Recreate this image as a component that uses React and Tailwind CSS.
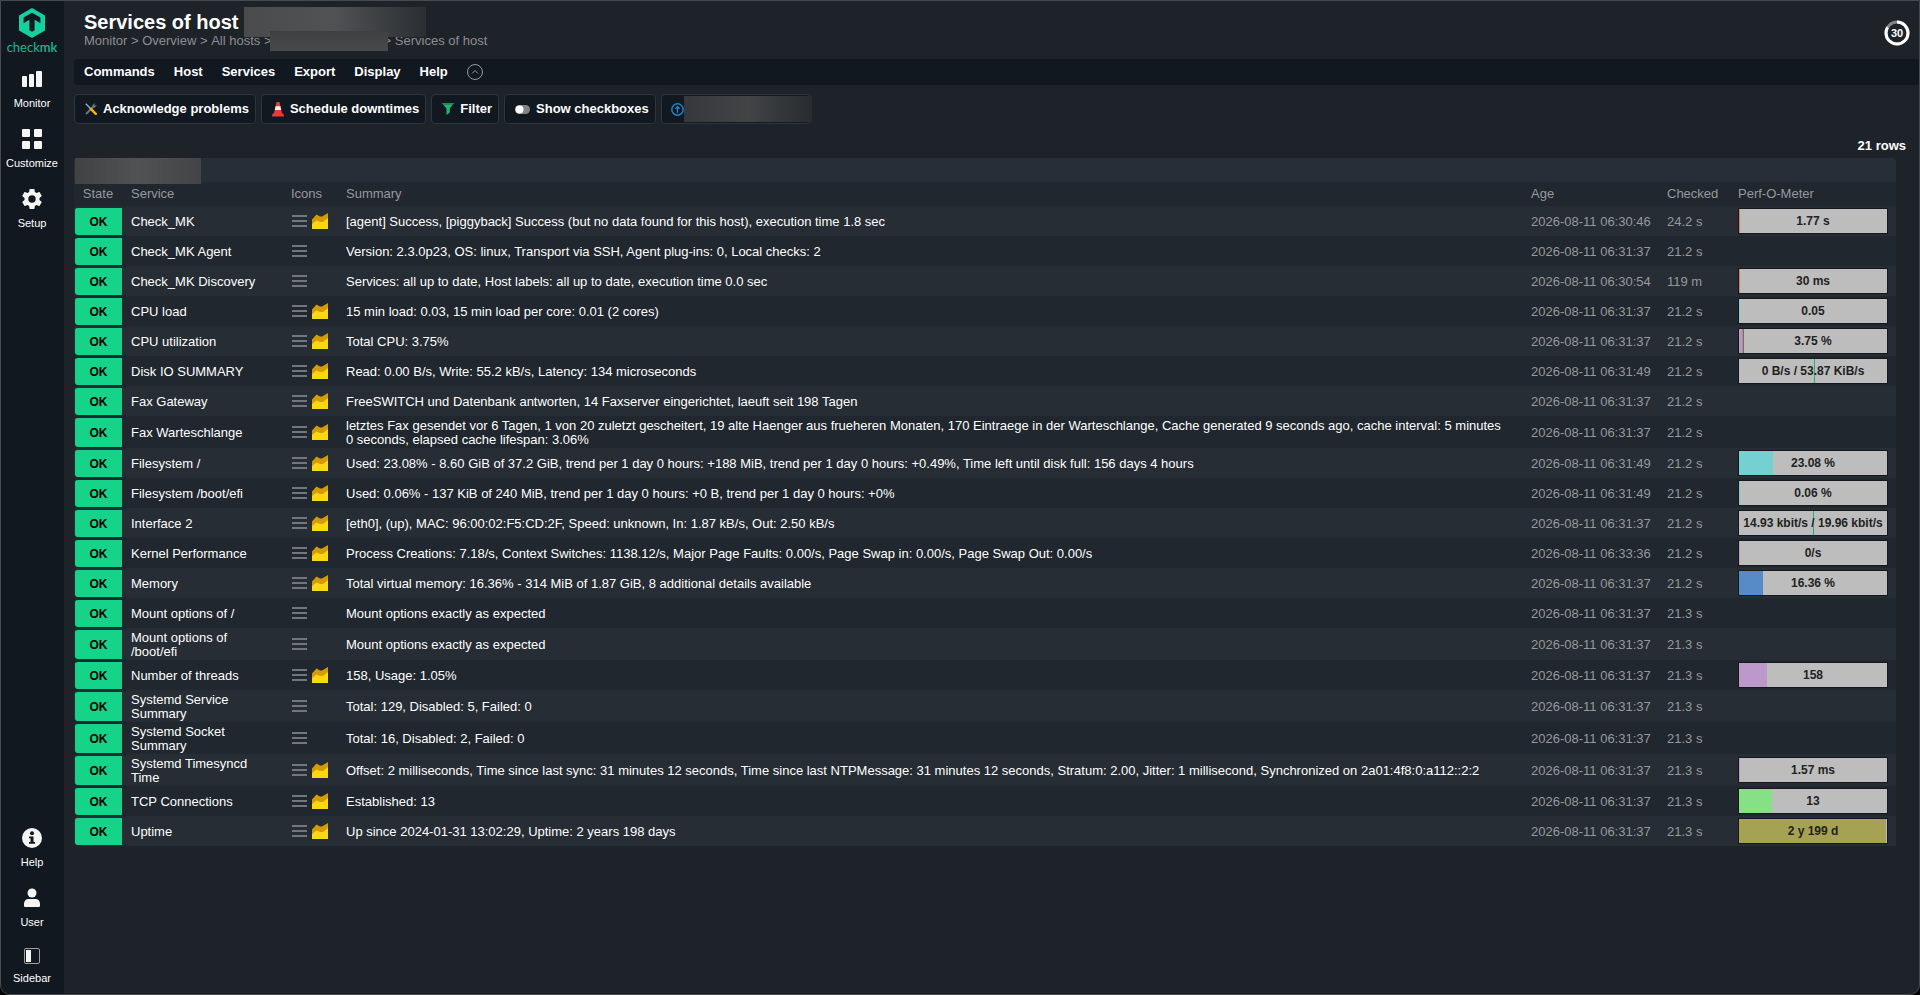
import React, { useState } from "react";

const ORANGE = "#d28460";
const PURPLE = "#bd98cb";
const CYAN = "#75d1d1";
const GREEN = "#86e086";
const BLUE = "#558bc6";

const services = [
  { name: "Check_MK", graph: true, summary: "[agent] Success, [piggyback] Success (but no data found for this host), execution time 1.8 sec", age: "2026-08-11 06:30:46", checked: "24.2 s", perf: { text: "1.77 s", parts: [[1, ORANGE]] } },
  { name: "Check_MK Agent", summary: "Version: 2.3.0p23, OS: linux, Transport via SSH, Agent plug-ins: 0, Local checks: 2", age: "2026-08-11 06:31:37", checked: "21.2 s" },
  { name: "Check_MK Discovery", summary: "Services: all up to date, Host labels: all up to date, execution time 0.0 sec", age: "2026-08-11 06:30:54", checked: "119 m", perf: { text: "30 ms", parts: [[1, ORANGE]] } },
  { name: "CPU load", graph: true, summary: "15 min load: 0.03, 15 min load per core: 0.01 (2 cores)", age: "2026-08-11 06:31:37", checked: "21.2 s", perf: { text: "0.05", parts: [[0.5, "#8fc3da"]] } },
  { name: "CPU utilization", graph: true, summary: "Total CPU: 3.75%", age: "2026-08-11 06:31:37", checked: "21.2 s", perf: { text: "3.75 %", parts: [[2, PURPLE], [0.7, ORANGE], [0.7, "#4f8078"]] } },
  { name: "Disk IO SUMMARY", graph: true, summary: "Read: 0.00 B/s, Write: 55.2 kB/s, Latency: 134 microseconds", age: "2026-08-11 06:31:49", checked: "21.2 s", perf: { text: "0 B/s / 53.87 KiB/s", parts: [[50, "transparent"], [0.7, GREEN], [0.7, BLUE]] } },
  { name: "Fax Gateway", graph: true, summary: "FreeSWITCH und Datenbank antworten, 14 Faxserver eingerichtet, laeuft seit 198 Tagen", age: "2026-08-11 06:31:37", checked: "21.2 s" },
  { name: "Fax Warteschlange", graph: true, summary: "letztes Fax gesendet vor 6 Tagen, 1 von 20 zuletzt gescheitert, 19 alte Haenger aus frueheren Monaten, 170 Eintraege in der Warteschlange, Cache generated 9 seconds ago, cache interval: 5 minutes 0 seconds, elapsed cache lifespan: 3.06%", age: "2026-08-11 06:31:37", checked: "21.2 s" },
  { name: "Filesystem /", graph: true, summary: "Used: 23.08% - 8.60 GiB of 37.2 GiB, trend per 1 day 0 hours: +188 MiB, trend per 1 day 0 hours: +0.49%, Time left until disk full: 156 days 4 hours", age: "2026-08-11 06:31:49", checked: "21.2 s", perf: { text: "23.08 %", parts: [[23.08, CYAN]] } },
  { name: "Filesystem /boot/efi", graph: true, summary: "Used: 0.06% - 137 KiB of 240 MiB, trend per 1 day 0 hours: +0 B, trend per 1 day 0 hours: +0%", age: "2026-08-11 06:31:49", checked: "21.2 s", perf: { text: "0.06 %", parts: [[0.7, CYAN]] } },
  { name: "Interface 2", graph: true, summary: "[eth0], (up), MAC: 96:00:02:F5:CD:2F, Speed: unknown, In: 1.87 kB/s, Out: 2.50 kB/s", age: "2026-08-11 06:31:37", checked: "21.2 s", perf: { text: "14.93 kbit/s / 19.96 kbit/s", parts: [[49.3, "transparent"], [0.7, GREEN], [0.7, BLUE]] } },
  { name: "Kernel Performance", graph: true, summary: "Process Creations: 7.18/s, Context Switches: 1138.12/s, Major Page Faults: 0.00/s, Page Swap in: 0.00/s, Page Swap Out: 0.00/s", age: "2026-08-11 06:33:36", checked: "21.2 s", perf: { text: "0/s", parts: [[0.7, PURPLE]] } },
  { name: "Memory", graph: true, summary: "Total virtual memory: 16.36% - 314 MiB of 1.87 GiB, 8 additional details available", age: "2026-08-11 06:31:37", checked: "21.2 s", perf: { text: "16.36 %", parts: [[16.36, BLUE]] } },
  { name: "Mount options of /", summary: "Mount options exactly as expected", age: "2026-08-11 06:31:37", checked: "21.3 s" },
  { name: "Mount options of /boot/efi", summary: "Mount options exactly as expected", age: "2026-08-11 06:31:37", checked: "21.3 s" },
  { name: "Number of threads", graph: true, summary: "158, Usage: 1.05%", age: "2026-08-11 06:31:37", checked: "21.3 s", perf: { text: "158", parts: [[19, PURPLE]] } },
  { name: "Systemd Service Summary", summary: "Total: 129, Disabled: 5, Failed: 0", age: "2026-08-11 06:31:37", checked: "21.3 s" },
  { name: "Systemd Socket Summary", summary: "Total: 16, Disabled: 2, Failed: 0", age: "2026-08-11 06:31:37", checked: "21.3 s" },
  { name: "Systemd Timesyncd Time", graph: true, summary: "Offset: 2 milliseconds, Time since last sync: 31 minutes 12 seconds, Time since last NTPMessage: 31 minutes 12 seconds, Stratum: 2.00, Jitter: 1 millisecond, Synchronized on 2a01:4f8:0:a112::2:2", age: "2026-08-11 06:31:37", checked: "21.3 s", perf: { text: "1.57 ms", parts: [[0.7, PURPLE]] } },
  { name: "TCP Connections", graph: true, summary: "Established: 13", age: "2026-08-11 06:31:37", checked: "21.3 s", perf: { text: "13", parts: [[22.3, GREEN]] } },
  { name: "Uptime", graph: true, summary: "Up since 2024-01-31 13:02:29, Uptime: 2 years 198 days", age: "2026-08-11 06:31:37", checked: "21.3 s", perf: { text: "2 y 199 d", parts: [[99.3, "#a5a353"]] } },
];

const Logo = () => (
  <svg width="26" height="30" viewBox="0 0 26 30">
    <path d="M13 0 26 7.5v15L13 30 0 22.5v-15z" fill="#15d1a0" />
    <path d="M13 4.8 21.400 9.600v5.600L18.500 13.500 15.600 11.800V22.300L13 23.800 10.400 22.300V11.800L7.500 13.500 4.600 15.200V9.600z" fill="#11181f" />
  </svg>
);

const MonitorIcon = () => (
  <svg width="20" height="20" viewBox="0 0 20 20" fill="#f5f5f5">
    <rect x="0" y="7" width="5" height="11" rx="1" />
    <rect x="7" y="5" width="5" height="13" rx="1" />
    <rect x="14" y="2" width="6" height="16" rx="1" />
  </svg>
);

const CustomizeIcon = () => (
  <svg width="20" height="20" viewBox="0 0 20 20" fill="#f5f5f5">
    <rect x="0" y="0" width="8" height="8" rx="1" />
    <rect x="12" y="0" width="8" height="8" rx="1" />
    <rect x="0" y="12" width="8" height="8" rx="1" />
    <rect x="12" y="12" width="8" height="8" rx="1" />
  </svg>
);

const SetupIcon = () => (
  <svg width="20" height="20" viewBox="2 2 20 20" fill="#f5f5f5">
    <path d="M19.43 12.98c.04-.32.07-.64.07-.98s-.03-.66-.07-.98l2.11-1.65c.19-.15.24-.42.12-.64l-2-3.46c-.12-.22-.39-.3-.61-.22l-2.49 1c-.52-.4-1.08-.73-1.69-.98l-.38-2.65C14.46 2.18 14.25 2 14 2h-4c-.25 0-.46.18-.49.42l-.38 2.65c-.61.25-1.17.59-1.69.98l-2.49-1c-.23-.09-.49 0-.61.22l-2 3.46c-.13.22-.07.49.12.64l2.11 1.65c-.04.32-.07.65-.07.98s.03.66.07.98l-2.11 1.65c-.19.15-.24.42-.12.64l2 3.46c.12.22.39.3.61.22l2.49-1c.52.4 1.08.73 1.69.98l.38 2.65c.03.24.24.42.49.42h4c.25 0 .46-.18.49-.42l.38-2.65c.61-.25 1.17-.59 1.69-.98l2.49 1c.23.09.49 0 .61-.22l2-3.46c.12-.22.07-.49-.12-.64zM12 15.7a3.7 3.7 0 1 1 0-7.4 3.7 3.7 0 0 1 0 7.4z" />
  </svg>
);

const HelpIcon = () => (
  <svg width="20" height="20" viewBox="0 0 20 20">
    <circle cx="10" cy="10" r="10" fill="#f5f5f5" />
    <circle cx="10" cy="5.2" r="2" fill="#11181f" />
    <path d="M7 8.5h4.500V14H13v1.800H7V14h1.500v-3.700H7z" fill="#11181f" />
  </svg>
);

const UserIcon = () => (
  <svg width="20" height="20" viewBox="0 0 20 20" fill="#f5f5f5">
    <circle cx="10" cy="5" r="4.5" />
    <path d="M2 16c0-3.200 2-5 4.500-5h7c2.500 0 4.500 1.800 4.500 5v1.500c0 1-.6 1.500-1.500 1.500h-13C2.600 19 2 18.500 2 17.500z" />
  </svg>
);

const SidebarIcon = () => (
  <svg width="16" height="16" viewBox="0 0 16 16">
    <rect x="0.500" y="0.500" width="15" height="15" rx="1.500" fill="none" stroke="#a0a3a5" />
    <rect x="2" y="2" width="5" height="12" fill="#f5f5f5" />
  </svg>
);

const ToolsIcon = () => (
  <svg width="12" height="12" viewBox="0 0 12 12">
    <path d="M1 11 8 4" stroke="#5f7d8c" strokeWidth="1.800" />
    <path d="M7 3.500 9.300.6l-.1 2.200 2.200-.1L8.600 5z" fill="#5f7d8c" stroke="#5f7d8c" strokeWidth=".6" />
    <path d="M.8.8 5.500 5.500" stroke="#9db2bd" strokeWidth="1.300" />
    <path d="M5.800 5.800 10.800 10.800" stroke="#ffb300" strokeWidth="2.400" strokeLinecap="round" />
  </svg>
);

const ConeIcon = () => (
  <svg width="12" height="16" viewBox="0 0 12 16">
    <path d="M4.500 1h3l2.700 12H1.800z" fill="#ee3a36" />
    <path d="M3.600 5.200h4.800L9.200 9H2.800z" fill="#eef0f1" />
    <path d="M.6 12.500h10.800L12 15.500H0z" fill="#ee3a36" />
  </svg>
);

const FilterIcon = () => (
  <svg width="12" height="12" viewBox="0 0 12 12">
    <path d="M0 0h12L7.800 5.500v4L4.500 12V5.500z" fill="#22b573" />
    <path d="M0 0h12l-1.500 2h-9z" fill="#1a8c5b" />
  </svg>
);

const ToggleIcon = () => (
  <svg width="15" height="9" viewBox="0 0 15 9">
    <rect width="15" height="9" rx="4.500" fill="#828486" />
    <circle cx="4.500" cy="4.500" r="4" fill="#fff" />
  </svg>
);

const UpIcon = () => (
  <svg className="shrink-0" width="13" height="13" viewBox="0 0 13 13" fill="none" stroke="#1e88d8">
    <circle cx="6.500" cy="6.500" r="5.700" strokeWidth="1.400" />
    <path d="M6.500 9.800V4M4.300 5.800 6.500 3.600l2.200 2.200" strokeWidth="1.300" />
  </svg>
);

const MenuIcon = () => (
  <svg width="16" height="16" viewBox="0 0 16 16" fill="#73777b">
    <rect x="1" y="2" width="15" height="2" />
    <rect x="1" y="7" width="15" height="2" />
    <rect x="1" y="12" width="15" height="2" />
  </svg>
);

const GraphIcon = () => (
  <svg width="16" height="16" viewBox="0 0 16 16">
    <path d="M0 6.500 4.500 1.500 8 3.500h2L16 0v16H0z" fill="#d39c05" />
    <path d="M0 11 4.500 7.500 8 9h3l5-4v11H0z" fill="#fbd80f" />
  </svg>
);

const mainNav = [
  { label: "Monitor", icon: <MonitorIcon /> },
  { label: "Customize", icon: <CustomizeIcon /> },
  { label: "Setup", icon: <SetupIcon /> },
];

const footerNav = [
  { label: "Help", icon: <HelpIcon /> },
  { label: "User", icon: <UserIcon /> },
  { label: "Sidebar", icon: <SidebarIcon /> },
];

const NavItem = ({ label, icon }) => (
  <button type="button" className="flex h-[60px] w-full flex-col items-center gap-[7px] text-[11px] font-medium leading-[14px] text-white">
    {icon}
    {label}
  </button>
);

const Sidebar = () => (
  <nav className="flex w-[63px] shrink-0 flex-col bg-[#11181f] pr-px">
    <a href="#home" className="flex flex-col items-center pt-[7px]">
      <Logo />
      <span className="font-['Lato',sans-serif] text-[13px] leading-[18px] text-[#15b88f]">
        check<b className="font-semibold">mk</b>
      </span>
    </a>
    <div className="mt-[13px]">
      {mainNav.map((item) => (
        <NavItem key={item.label} {...item} />
      ))}
    </div>
    <div className="mt-auto -mb-[14px]">
      {footerNav.map((item) => (
        <NavItem key={item.label} {...item} />
      ))}
    </div>
  </nav>
);

const ActionButton = ({ icon, children }) => (
  <button type="button" className="flex h-[30px] items-center gap-1.5 rounded border border-[#2b3642] bg-[#11181f] pl-[10px] pr-1.5 text-[13px] font-bold text-white">
    {icon}
    {children}
  </button>
);

const PerfOMeter = ({ text, parts }) => (
  <div className="relative flex h-[26px] w-[150px] border border-[#15191d] bg-[#bdbdbd]">
    {parts.map(([width, color], i) => (
      <div key={i} className="h-full shrink-0" style={{ width: `${width}%`, backgroundColor: color }} />
    ))}
    <span className="absolute inset-0 text-center text-xs font-bold leading-6 whitespace-nowrap text-[#222]">{text}</span>
  </div>
);

const ServiceRow = ({ service }) => (
  <tr className="h-[30px] odd:bg-[#262d34] even:bg-[#20272e]">
    <td className="rounded border-t-2 border-r-4 border-b border-l border-transparent bg-[#15d389] bg-clip-padding text-center text-xs font-bold text-black">
      OK
    </td>
    <td className="pt-[3px] pr-4 pb-px pl-[5px]">
      <a href="#service">{service.name}</a>
    </td>
    <td className="px-[5px]">
      <div className="flex items-center gap-[5px]">
        <button type="button" aria-label="Open the action menu"><MenuIcon /></button>
        {service.graph && <a href="#graphs" aria-label="Service graphs"><GraphIcon /></a>}
      </div>
    </td>
    <td className="pt-[3px] pr-4 pb-px pl-[5px]">{service.summary}</td>
    <td className="px-[5px] pt-[3px] pb-px whitespace-nowrap text-[#97999c]">{service.age}</td>
    <td className="px-[5px] pt-[3px] pb-px whitespace-nowrap text-[#97999c]">{service.checked}</td>
    <td className="px-[5px]">{service.perf && <PerfOMeter {...service.perf} />}</td>
  </tr>
);

const App = () => {
  const [showActions, setShowActions] = useState(true);

  return (
    <div className="min-h-screen bg-black">
      <div className="flex min-h-screen overflow-hidden rounded-b-[10px] border border-[#484b4d] bg-[#1e2229] font-['Liberation_Sans',Arial,sans-serif] text-[13px] leading-[14px] text-white">
        <Sidebar />
        <main className="min-w-0 flex-1 pl-[10px]">
          <header className="flex justify-between pt-1.5 pr-[9px] pl-[10px]">
            <div>
              <h1 className="flex h-[30px] items-center gap-[5px] text-xl font-bold">
                Services of host
                <span className="relative h-[30px] w-[182px] bg-linear-to-r from-[#4a4b4d] via-[#505254] to-[#2b2f33]" />
              </h1>
              <div className="-mt-1.5 flex h-5 items-center whitespace-nowrap text-[#8c8f92]">
                <a href="#monitor">Monitor</a>
                <span className="whitespace-pre"> &gt; </span>
                <a href="#overview">Overview</a>
                <span className="whitespace-pre"> &gt; </span>
                <a href="#hosts">All hosts</a>
                <span className="whitespace-pre"> &gt;</span>
                <span className="relative -mr-1 -ml-0.5 h-5 w-[118px] bg-linear-to-b from-[#3e4042] to-[#47494b]" />
                <span className="whitespace-pre">&gt; </span>
                <a href="#services">Services of host</a>
              </div>
            </div>
            <svg className="mt-[13px]" width="26" height="26" viewBox="0 0 26 26" role="img" aria-label="Refresh in 30 seconds">
              <circle cx="13" cy="13" r="11" fill="none" stroke="#828486" strokeWidth="3" />
              <circle cx="13" cy="13" r="11" fill="none" stroke="#fff" strokeWidth="3" strokeDasharray="57.500 69.100" transform="rotate(-90 13 13)" />
              <text x="13" y="17" textAnchor="middle" fontSize="11" fontWeight="bold" fill="#fff">30</text>
            </svg>
          </header>

          <div className="mt-2 flex h-[26px] items-center gap-[19px] rounded-l-sm bg-[#11181f] pl-[10px] font-bold">
            {["Commands", "Host", "Services", "Export", "Display", "Help"].map((menu) => (
              <button key={menu} type="button">{menu}</button>
            ))}
            <button type="button" aria-label="Toggle shortcuts" onClick={() => setShowActions(!showActions)}>
              <svg width="16" height="16" viewBox="0 0 16 16" fill="none" stroke="#97999c">
                <circle cx="8" cy="8" r="7.500" />
                <path d="M5 9.500 8 6.500l3 3" />
              </svg>
            </button>
          </div>

          {showActions && (
            <div className="mt-[9px] flex gap-[5px]">
              <ActionButton icon={<ToolsIcon />}>Acknowledge problems</ActionButton>
              <ActionButton icon={<ConeIcon />}>Schedule downtimes</ActionButton>
              <ActionButton icon={<FilterIcon />}>Filter</ActionButton>
              <ActionButton icon={<ToggleIcon />}>Show checkboxes</ActionButton>
              <button type="button" aria-label="Host" className="flex h-[30px] w-[150px] items-center rounded border border-[#2b3642] bg-[#11181f] pl-[9px]">
                <UpIcon />
                <span className="h-[26px] w-[128px] shrink-0 bg-linear-to-r from-[#36393b] via-[#424446] to-[#282c30]" />
              </button>
            </div>
          )}

          <div className="mt-[15px] pr-[13px] text-right font-bold">21 rows</div>

          <div className="mt-[5px] mr-[23px]">
            <div className="h-6 rounded-t bg-[#272e37] pl-px">
              <div className="relative h-[26px] w-[126px] bg-linear-to-r from-[#404244] via-[#505254] to-[#424446]" />
            </div>
            <table className="w-full table-fixed border-separate border-spacing-0 text-left">
              <colgroup>
                <col className="w-[52px]" />
                <col className="w-[160px]" />
                <col className="w-[55px]" />
                <col />
                <col className="w-[136px]" />
                <col className="w-[71px]" />
                <col className="w-[163px]" />
              </colgroup>
              <thead>
                <tr className="h-6 bg-[#20272e] text-[#97999c]">
                  <th className="pr-1 text-center font-normal">State</th>
                  <th className="px-[5px] font-normal">Service</th>
                  <th className="px-[5px] font-normal">Icons</th>
                  <th className="px-[5px] font-normal">Summary</th>
                  <th className="px-[5px] font-normal">Age</th>
                  <th className="px-[5px] font-normal">Checked</th>
                  <th className="px-[5px] font-normal">Perf-O-Meter</th>
                </tr>
              </thead>
              <tbody>
                {services.map((service) => (
                  <ServiceRow key={service.name} service={service} />
                ))}
              </tbody>
            </table>
          </div>
        </main>
      </div>
    </div>
  );
};

export default App;
